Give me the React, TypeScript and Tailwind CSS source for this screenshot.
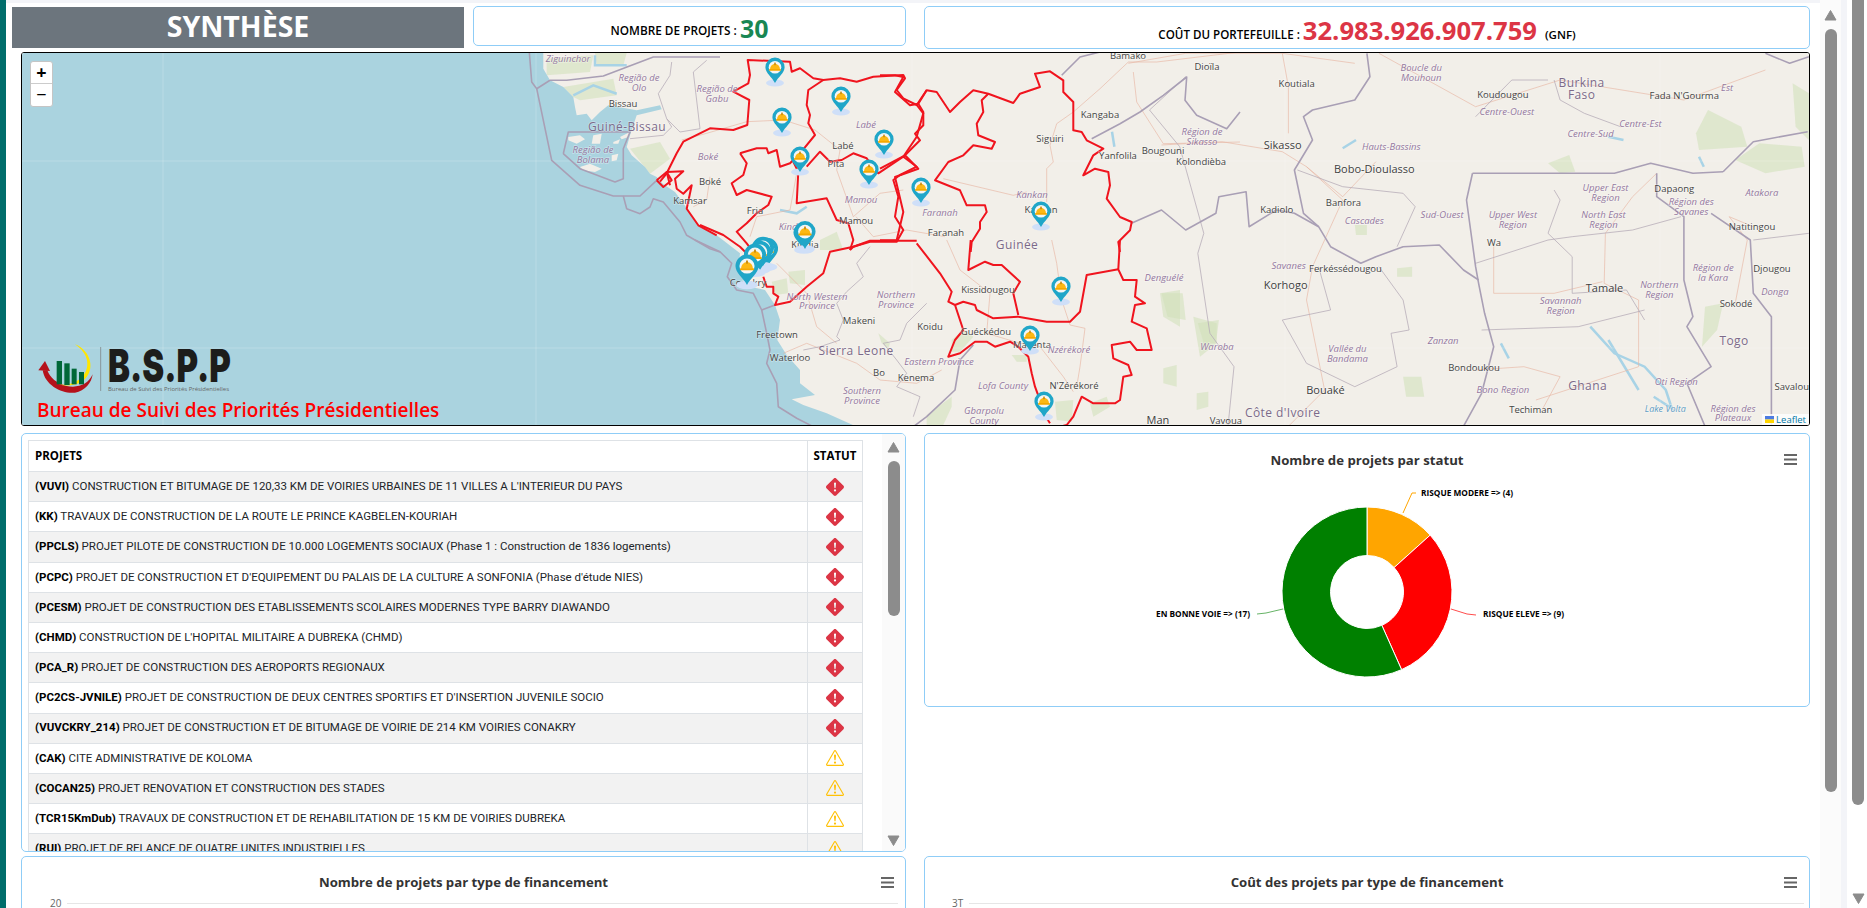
import React from 'react';
import { BsExclamationDiamondFill, BsExclamationTriangle } from 'react-icons/bs';

// points are read off crops: origin + value / 3
const pts = (ox: number, oy: number, list: number[]): string => {
  const out: string[] = [];
  for (let i = 0; i < list.length; i += 2) out.push(`${(ox + list[i] / 3).toFixed(1)},${(oy + list[i + 1] / 3).toFixed(1)}`);
  return out.join(' ');
};
// crop of the wide map, 1.656 x 3
const wide = (list: number[]): string => {
  const out: string[] = [];
  for (let i = 0; i < list.length; i += 2) out.push(`${(920 + list[i] / 1.656).toFixed(1)},${(list[i + 1] / 3).toFixed(1)}`);
  return out.join(' ');
};

const seaPoints = [
  '22,53',
  pts(480, 52, [190, 0, 190, 50, 210, 85, 250, 105, 280, 135, 285, 165, 290, 190, 320, 185, 335, 205, 360, 180, 385, 160, 470, 175, 540, 160, 545, 172, 470, 190, 450, 250, 440, 285, 455, 310, 495, 345, 510, 365, 530, 375, 548, 395, 585, 420, 600, 440, 622, 470, 655, 520, 710, 550]),
  pts(640, 240, [300, 40, 296, 80, 330, 140, 375, 150, 405, 195, 420, 240, 412, 300, 440, 345, 480, 390, 480, 430, 525, 465, 455, 478, 490, 495, 560, 520, 650, 560]),
  '857,426 22,426',
].join(' ');

const islands = [
  pts(480, 52, [265, 255, 300, 250, 315, 262, 290, 275, 265, 265]),
  pts(480, 52, [340, 250, 365, 245, 360, 275, 335, 275]),
  pts(480, 52, [400, 270, 420, 262, 415, 275, 400, 275]),
  pts(480, 52, [420, 255, 450, 240, 445, 255, 425, 262]),
  pts(480, 52, [300, 345, 330, 335, 365, 350, 345, 360, 310, 355]),
  pts(480, 52, [395, 310, 415, 305, 410, 325, 395, 328]),
];

const forest = [
  pts(480, 52, [250, 105, 400, 80, 410, 130, 300, 145, 280, 135]),
  pts(480, 52, [450, 290, 540, 270, 570, 320, 510, 365]),
  pts(480, 52, [200, 20, 340, 10, 330, 60, 200, 70]),
  pts(480, 52, [345, 3, 440, 3, 430, 40, 350, 40]),
  pts(640, 50, [540, 570, 590, 545, 610, 600, 540, 600]),
  pts(640, 240, [395, 125, 440, 115, 445, 160, 405, 165]),
  pts(640, 240, [445, 95, 495, 90, 495, 135, 450, 130]),
  pts(640, 240, [715, 280, 750, 310, 745, 325, 725, 310]),
  pts(880, 240, [215, 300, 250, 270, 280, 290, 240, 335, 215, 335]),
  pts(880, 240, [140, 525, 215, 470, 215, 500, 190, 555, 140, 555]),
  pts(880, 240, [525, 485, 580, 480, 575, 545, 530, 540]),
  pts(880, 240, [395, 345, 440, 345, 440, 365, 410, 365]),
  pts(880, 240, [840, 160, 900, 150, 900, 260, 850, 230]),
  pts(880, 240, [940, 230, 1010, 250, 1010, 310, 960, 350]),
  pts(880, 240, [850, 385, 890, 375, 890, 440, 850, 430]),
  pts(880, 240, [950, 460, 985, 455, 985, 500, 950, 510]),
  pts(880, 240, [630, 490, 680, 470, 690, 500, 640, 530]),
  wide([1305, 330, 1360, 380, 1370, 440, 1290, 450, 1285, 400]),
  wide([1350, 480, 1390, 430, 1460, 440, 1465, 500, 1400, 520]),
  wide([1445, 250, 1472, 280, 1472, 420, 1450, 380]),
  wide([1040, 490, 1075, 465, 1085, 515, 1060, 520]),
  wide([790, 805, 815, 800, 815, 830, 790, 830]),
  wide([720, 675, 740, 675, 740, 705, 722, 705]),
  wide([1300, 920, 1330, 910, 1320, 990, 1295, 1040]),
  wide([460, 970, 495, 960, 490, 1030, 470, 1030]),
  wide([400, 880, 435, 880, 440, 960, 410, 950]),
  wide([800, 1130, 830, 1130, 835, 1190, 805, 1190]),
];

// rivers and lakes: thin branches rather than blocks
const rivers = [
  wide([1110, 980, 1150, 1060, 1200, 1100, 1235, 1170, 1245, 1225, 1215, 1190]),
  wide([1140, 1020, 1170, 1110, 1190, 1170]),
  wide([962, 1030, 975, 1075]),
  wide([700, 445, 722, 420]),
  wide([318, 395, 322, 440]),
  wide([1290, 470, 1298, 500]),
  wide([1140, 410, 1165, 420]),
  pts(640, 50, [420, 480, 470, 490, 500, 470]),
  pts(480, 52, [280, 130, 340, 100, 410, 125]),
  pts(480, 52, [345, 10, 345, 40, 440, 40]),
];

const borders = [
  pts(480, 52, [148, 0, 155, 90, 170, 110, 210, 85]),
  pts(480, 52, [170, 110, 215, 325, 300, 400, 400, 432, 480, 432, 530, 385]),
  pts(480, 52, [430, 432, 440, 470, 480, 485, 510, 465, 520, 440, 550, 450, 600, 510, 620, 550, 690, 590, 720, 600]),
  pts(480, 52, [250, 305, 265, 240, 450, 240, 430, 290, 430, 380, 405, 390, 300, 350, 250, 305]),
  pts(640, 240, [165, 0, 240, 35, 275, 70, 262, 110, 290, 150, 340, 160, 365, 210, 380, 280, 390, 330, 380, 370, 410, 430, 415, 500, 470, 535, 520, 560]),
  pts(640, 240, [365, 210, 405, 195]),
  pts(480, 52, [210, 85, 260, 85, 370, 72, 520, 15, 720, 15]),
  pts(640, 240, [1000, 315, 960, 360, 945, 450, 860, 530, 820, 560]),
  wide([740, 160, 745, 230, 720, 300, 650, 330, 635, 350, 650, 420, 620, 510, 635, 640, 660, 680, 680, 740, 730, 790, 755, 770, 800, 740, 860, 735, 900, 810, 925, 840]),
  wide([350, 670, 400, 630, 440, 690, 490, 640, 495, 590, 540, 575, 545, 680, 590, 630, 620, 640, 660, 680]),
  wide([915, 520, 1050, 520, 1150, 520, 1210, 490, 1280, 520, 1330, 515]),
  wide([915, 520, 905, 600, 920, 800, 925, 850, 935, 940, 950, 1040, 930, 1180, 900, 1279]),
  wide([1220, 520, 1220, 590, 1265, 650, 1265, 840, 1280, 950, 1270, 980, 1310, 1100, 1270, 1150, 1300, 1279]),
  wide([1310, 640, 1375, 720, 1380, 880, 1410, 950, 1410, 1100, 1410, 1279]),
  wide([1330, 515, 1380, 425, 1470, 395]),
  wide([1400, 160, 1440, 190, 1472, 170]),
  pts(880, 52, [635, 260, 720, 215, 780, 180, 850, 130, 920, 75, 915, 145, 950, 190, 1040, 230, 1080, 180]),
  pts(880, 52, [545, 70, 600, 15, 660, 0]),
];

const regionLines = [
  pts(480, 52, [575, 30, 570, 70, 535, 125, 560, 200, 600, 240, 660, 230, 640, 60, 680, 25]),
  pts(480, 52, [450, 260, 550, 250, 575, 225, 560, 200]),
  pts(640, 240, [690, 20, 650, 70, 670, 110, 620, 155, 590, 190, 610, 240, 590, 290, 600, 300, 540, 320, 490, 330]),
  pts(640, 240, [860, 190, 800, 250, 780, 300, 730, 310, 770, 360, 800, 400, 770, 440, 840, 470, 820, 530]),
  wide([440, 230, 380, 330, 430, 440, 470, 700, 460, 760, 480, 1000, 520, 1100, 510, 1279]),
  wide([625, 510, 700, 560, 800, 580, 820, 620, 790, 740]),
  wide([760, 800, 800, 900, 810, 990, 780, 1000, 790, 1100, 720, 1160, 640, 1090, 600, 960, 680, 930, 660, 800]),
  wide([1050, 570, 1060, 600, 1040, 700, 1080, 770, 1080, 880, 1170, 870, 1200, 960]),
  wide([920, 790, 1040, 720, 1080, 710, 1180, 690, 1260, 650]),
  wide([930, 990, 1090, 980, 1200, 930]),
  wide([1160, 380, 1100, 340, 1060, 300, 1050, 240]),
  wide([920, 350, 980, 240, 1040, 240]),
  wide([1472, 700, 1380, 720]),
];

const roads = [
  pts(640, 50, [125, 270, 200, 250, 320, 215, 430, 210, 525, 240, 600, 300, 590, 360, 640, 500, 720, 430, 790, 420]),
  pts(640, 50, [210, 380, 200, 450, 160, 470]),
  pts(640, 50, [470, 370, 450, 480, 350, 500, 330, 560]),
  pts(640, 50, [648, 500, 700, 560, 800, 540, 915, 560]),
  pts(640, 240, [430, 340, 500, 310, 650, 370, 720, 420, 830, 430, 905, 390]),
  pts(640, 240, [410, 70, 500, 160, 530, 260, 590, 310]),
  pts(880, 52, [510, 280, 520, 330, 500, 350, 500, 450]),
  pts(880, 52, [510, 280, 530, 215, 580, 180, 660, 110, 745, 30, 830, 30, 1080, 0]),
  pts(880, 52, [760, 60, 770, 150, 850, 275, 1080, 270]),
  pts(880, 52, [190, 380, 400, 430, 440, 420]),
  pts(880, 240, [200, 0, 240, 90, 330, 160, 320, 280, 420, 310, 480, 320, 550, 410, 580, 455]),
  pts(880, 240, [515, 0, 530, 70, 545, 180, 570, 255, 615, 265, 600, 380, 590, 440]),
  wide([400, 435, 500, 425, 600, 455, 640, 500, 700, 600, 650, 800, 640, 900, 670, 1170, 610, 1279]),
  wide([755, 485, 700, 590, 640, 500]),
  wide([600, 160, 610, 260, 610, 400]),
  wide([345, 190, 440, 160, 600, 160, 720, 190]),
  wide([760, 160, 920, 320, 1060, 240, 1265, 300, 1400, 210]),
  wide([1133, 850, 1190, 900, 1190, 1100, 1020, 1200]),
  wide([950, 730, 950, 880, 1050, 880, 1130, 845]),
  wide([1133, 850, 1135, 700, 1180, 590, 1220, 520]),
  wide([1350, 910, 1370, 720, 1340, 650, 1380, 680]),
  wide([1030, 1230, 1060, 1130, 1000, 1100, 920, 1110]),
];

const redLines = [
  pts(640, 50, [60, 395, 80, 370, 110, 310, 130, 275, 210, 235, 280, 240, 322, 225, 328, 150, 280, 125, 325, 100, 330, 75, 323, 30, 450, 35, 455, 65, 480, 55, 520, 85, 550, 90, 600, 85, 650, 95, 700, 80, 790, 75, 795, 85, 770, 120, 790, 145, 830, 165, 860, 120]),
  pts(880, 52, [115, 155, 140, 115, 170, 120, 210, 180, 240, 150, 280, 115, 325, 125, 400, 153, 420, 125, 480, 105, 465, 65, 510, 58, 550, 85, 550, 120, 580, 150, 580, 235, 605, 240, 620, 265, 670, 290, 640, 310, 610, 370, 645, 350, 685, 360, 690, 400, 680, 440, 720, 495, 755, 510, 750, 535, 715, 570, 720, 600]),
  pts(880, 240, [720, 0, 715, 88, 730, 120, 770, 120, 765, 170, 795, 190, 765, 195, 755, 245, 800, 265, 815, 330, 770, 330, 750, 305, 695, 315, 700, 355, 745, 375, 755, 405, 730, 410, 720, 480, 705, 490, 670, 490, 640, 490, 605, 470, 580, 530, 560, 555, 540, 560]),
  pts(880, 240, [510, 550, 500, 535, 465, 440, 455, 400, 445, 350, 415, 320, 390, 305, 345, 320, 320, 305, 285, 305, 240, 340, 205, 350, 225, 300, 250, 270, 225, 195, 205, 185, 215, 155, 180, 100, 110, 10]),
  pts(640, 240, [830, 2, 690, 2, 640, 20, 570, 35, 550, 100, 500, 140, 450, 185, 405, 195, 415, 170, 400, 160, 400, 140, 380, 140, 370, 110]),
  pts(480, 52, [530, 385, 560, 360, 610, 358, 585, 380, 590, 410, 610, 425, 635, 400, 620, 470, 655, 520, 710, 550]),
  pts(480, 52, [530, 385, 550, 405, 575, 385, 560, 360, 570, 400]),
  pts(640, 50, [180, 525, 250, 555, 300, 590, 325, 615]),
  pts(640, 50, [300, 310, 350, 295, 380, 295, 385, 310, 410, 300, 420, 350, 450, 340, 480, 310, 525, 255, 505, 220, 510, 195, 500, 165, 505, 120, 550, 90]),
  pts(640, 50, [460, 335, 475, 365, 470, 460, 560, 445, 590, 510, 625, 520, 640, 570, 630, 600]),
  pts(640, 50, [300, 310, 320, 340, 310, 375, 275, 400, 290, 435, 320, 420, 395, 440, 385, 465, 350, 490, 320, 520, 290, 545, 320, 580, 335, 600]),
  pts(640, 50, [500, 350, 540, 305, 570, 335, 605, 330, 640, 310, 680, 325, 715, 370, 790, 320, 830, 350, 780, 375, 760, 390, 775, 440, 765, 500, 790, 540, 770, 575, 690, 575, 640, 590, 630, 600]),
  pts(640, 50, [790, 320, 830, 260, 850, 190, 830, 165]),
  pts(880, 52, [0, 70, 45, 70, 70, 75, 45, 120, 90, 160, 115, 155, 130, 180, 130, 220, 105, 245, 120, 265, 75, 310, 115, 350, 45, 375, 70, 480, 50, 565, 0, 565]),
  pts(880, 52, [75, 310, 0, 350]),
  pts(880, 52, [325, 125, 305, 145, 310, 180, 290, 215, 295, 250, 345, 270, 335, 290, 280, 280, 250, 310, 205, 330, 165, 385, 240, 415, 260, 460, 315, 460, 320, 480, 300, 510, 300, 530, 275, 570, 272, 600]),
  pts(880, 240, [272, 0, 265, 90, 315, 65, 340, 75, 365, 75, 420, 125, 400, 160, 415, 225]),
  pts(880, 240, [225, 195, 250, 185, 285, 195, 290, 210, 340, 235, 415, 230, 500, 245, 570, 245, 600, 215, 620, 105, 715, 88]),
];

type Label = [string, number, number, string];
// kinds: c city, b big city, r region, p country
const labels: Label[] = [
  ['Ziguinchor', 568, 62, 'r'], ['Região de', 639, 81, 'r'], ['Olo', 639, 91, 'r'], ['Bissau', 623, 107, 'c'],
  ['Guiné-Bissau', 627, 131, 'p'], ['Região de', 593, 153, 'r'], ['Bolama', 593, 163, 'r'], ['Região de', 717, 92, 'r'],
  ['Gabu', 717, 102, 'r'], ['Boké', 708, 160, 'r'], ['Boké', 710, 185, 'c'], ['Kamsar', 690, 204, 'c'], ['Labé', 866, 128, 'r'],
  ['Labé', 843, 149, 'c'], ['Pita', 836, 167, 'c'], ['Mamou', 861, 203, 'r'], ['Mamou', 856, 224, 'c'], ['Faranah', 940, 216, 'r'],
  ['Faranah', 946, 236, 'c'], ['Fria', 755, 214, 'c'], ['Kindia', 792, 230, 'r'], ['Kindia', 805, 248, 'c'], ['Conakry', 748, 286, 'c'],
  ['North Western', 817, 300, 'r'], ['Province', 817, 309, 'r'], ['Northern', 896, 298, 'r'], ['Province', 896, 308, 'r'],
  ['Makeni', 859, 324, 'c'], ['Freetown', 777, 338, 'c'], ['Waterloo', 790, 361, 'c'], ['Sierra Leone', 856, 355, 'p'],
  ['Eastern Province', 939, 365, 'r'], ['Bo', 879, 376, 'c'], ['Kenema', 916, 381, 'c'], ['Koidu', 930, 330, 'c'],
  ['Southern', 862, 394, 'r'], ['Province', 862, 404, 'r'], ['Lofa County', 1003, 389, 'r'], ['Gbarpolu', 984, 414, 'r'],
  ['County', 984, 424, 'r'], ['Kissidougou', 988, 293, 'c'], ['Guéckédou', 986, 335, 'c'], ['Macenta', 1032, 348, 'c'],
  ['Nzérékoré', 1069, 353, 'r'], ["N'Zérékoré", 1074, 389, 'c'], ['Man', 1158, 424, 'b'], ['Vavoua', 1227, 424, 'c'],
  ['Kankan', 1032, 198, 'r'], ['Kankan', 1041, 213, 'c'], ['Guinée', 1017, 249, 'p'], ['Siguiri', 1050, 142, 'c'],
  ['Kangaba', 1100, 118, 'c'], ['Bamako', 1128, 59, 'c'], ['Yanfolila', 1118, 159, 'c'], ['Bougouni', 1163, 154, 'c'],
  ['Région de', 1203, 135, 'r'], ['Sikasso', 1203, 145, 'r'], ['Kolondièba', 1202, 165, 'c'], ['Dioïla', 1208, 70, 'c'],
  ['Denguélé', 1164, 281, 'r'], ['Waroba', 1218, 350, 'r'], ['Koutiala', 1298, 87, 'c'], ['Boucle du', 1423, 71, 'r'],
  ['Mouhoun', 1423, 81, 'r'], ['Sikasso', 1284, 149, 'b'], ['Kadiolo', 1278, 213, 'c'], ['Hauts-Bassins', 1393, 150, 'r'],
  ['Bobo-Dioulasso', 1376, 173, 'b'], ['Banfora', 1345, 206, 'c'], ['Cascades', 1366, 224, 'r'], ['Sud-Ouest', 1444, 218, 'r'],
  ['Savanes', 1290, 269, 'r'], ['Korhogo', 1287, 289, 'b'], ['Ferkéssédougou', 1347, 272, 'c'], ['Vallée du', 1349, 352, 'r'],
  ['Bandama', 1349, 362, 'r'], ['Zanzan', 1445, 344, 'r'], ['Bondoukou', 1476, 371, 'c'], ['Bouaké', 1327, 394, 'b'],
  ["Côte d'Ivoire", 1284, 417, 'p'], ['Koudougou', 1505, 98, 'c'], ['Centre-Ouest', 1509, 115, 'r'], ['Burkina', 1584, 87, 'p'],
  ['Faso', 1584, 99, 'p'], ['Centre-Sud', 1593, 137, 'r'], ['Centre-Est', 1643, 127, 'r'], ["Fada N'Gourma", 1687, 99, 'c'],
  ['Est', 1730, 91, 'r'], ['Upper East', 1608, 191, 'r'], ['Region', 1608, 201, 'r'], ['North East', 1606, 218, 'r'],
  ['Region', 1606, 228, 'r'], ['Upper West', 1515, 218, 'r'], ['Region', 1515, 228, 'r'], ['Wa', 1496, 246, 'c'], ['Dapaong', 1677, 192, 'c'],
  ['Région des', 1694, 205, 'r'], ['Savanes', 1694, 215, 'r'], ['Atakora', 1765, 196, 'r'], ['Natitingou', 1755, 230, 'c'],
  ['Djougou', 1775, 272, 'c'], ['Région de', 1716, 271, 'r'], ['la Kara', 1716, 281, 'r'], ['Donga', 1778, 295, 'r'], ['Tamale', 1607, 292, 'b'],
  ['Northern', 1662, 288, 'r'], ['Region', 1662, 298, 'r'], ['Savannah', 1563, 304, 'r'], ['Region', 1563, 314, 'r'], ['Sokodé', 1739, 307, 'c'],
  ['Togo', 1737, 345, 'p'], ['Ghana', 1590, 390, 'p'], ['Oti Region', 1679, 385, 'r'], ['Bono Region', 1505, 393, 'r'], ['Techiman', 1533, 413, 'c'],
  ['Lake Volta', 1668, 412, 'w'], ['Savalou', 1795, 390, 'c'], ['Région des', 1736, 412, 'r'], ['Plateaux', 1736, 421, 'r'],
];

const labelStyle: Record<string, { size: number; fill: string; italic?: boolean; spacing?: number }> = {
  c: { size: 9.5, fill: '#444444' },
  b: { size: 11, fill: '#404040' },
  r: { size: 9.5, fill: '#94789f', italic: true },
  w: { size: 9, fill: '#5f9cc4', italic: true },
  p: { size: 12, fill: '#7c6a89', spacing: 0.4 },
};

const pins: [number, number, number][] = [
  [775, 83, 1], [841, 112, 1], [782, 133, 1], [884, 155, 1], [800, 172, 1], [869, 185, 1], [921, 203, 1],
  [804, 250, 1.1], [805, 249, 1.1], [767, 267, 1.15], [763, 266, 1.15], [760, 270, 1.15], [755, 273, 1.15], [747, 285, 1.2],
  [1041, 227, 1], [1061, 302, 1], [1030, 351, 1], [1044, 417, 1],
];

const Pin: React.FC<{ x: number; y: number; s: number }> = ({ x, y, s }) => (
  <g transform={`translate(${x} ${y}) scale(${s})`}>
    <ellipse cx="0" cy="0" rx="9" ry="3.5" fill="#cfdff8" />
    <path d="M0 0 C-3 -6 -9.6 -10 -9.6 -15.8 A9.6 9.6 0 0 1 9.6 -15.8 C9.6 -10 3 -6 0 0 Z" fill="#20a6c8" />
    <circle cx="0" cy="-15.8" r="6.3" fill="#f4f6f5" />
    <path d="M-5 -13.6 A5 5.6 0 0 1 5 -13.6 Z" fill="#fdb813" />
    <rect x="-6" y="-14" width="12" height="1.8" rx="0.9" fill="#f5a800" />
    <rect x="-0.8" y="-20.4" width="1.6" height="2.6" fill="#c98a10" />
  </g>
);

const MapSvg: React.FC = () => (
  <svg viewBox="22 53 1788 372" width="1788" height="372" className="block">
    <rect x="22" y="53" width="1788" height="372" fill="#f2efe9" />
    {forest.map((p, i) => <polygon key={i} points={p} fill="#cfe0b8" opacity="0.55" />)}
    <polygon points={seaPoints} fill="#aad3df" />
    {islands.map((p, i) => <polygon key={i} points={p} fill="#f2efe9" />)}
    {rivers.map((p, i) => <polyline key={i} points={p} fill="none" stroke="#a8d3e6" strokeWidth="2.5" />)}
    {[163, 536, 912, 1285, 1660].map(x => <line key={x} x1={x} x2={x} y1="53" y2="425" stroke="#ffffff" strokeOpacity="0.2" />)}
    {[161, 348].map(y => <line key={y} x1="22" x2="1810" y1={y} y2={y} stroke="#ffffff" strokeOpacity="0.2" />)}
    {roads.map((p, i) => <polyline key={i} points={p} fill="none" stroke="#e8b5a2" strokeWidth="0.8" opacity="0.8" />)}
    {regionLines.map((p, i) => <polyline key={i} points={p} fill="none" stroke="#b7adb9" strokeWidth="0.8" />)}
    {borders.map((p, i) => <polyline key={i} points={p} fill="none" stroke="#a99fb5" strokeWidth="1.6" strokeLinejoin="round" />)}
    {redLines.map((p, i) => <polyline key={i} points={p} fill="none" stroke="#f0141e" strokeWidth="2" strokeLinejoin="round" />)}
    {labels.map(([t, x, y, k], i) => {
      const s = labelStyle[k];
      // the right part of the list was read at 1.65 before the crop scale was corrected
      const lx = x > 1200 ? x - (x - 920) * 0.0036 : x;
      return (
        <text key={i} x={lx} y={y} textAnchor="middle" fontSize={s.size} fill={s.fill} fontStyle={s.italic ? 'italic' : 'normal'} letterSpacing={s.spacing ?? 0} stroke="#ffffff" strokeOpacity="0.35" strokeWidth="1.4" paintOrder="stroke">
          {t}
        </text>
      );
    })}
    {pins.map(([x, y, s], i) => <Pin key={i} x={x} y={y} s={s} />)}
  </svg>
);

const Logo: React.FC = () => (
  <svg viewBox="30 340 210 56" width="210" height="56" className="block">
    <g transform="translate(20 330) scale(0.3333)">
      <path d="M68 118 C75 165 130 190 165 185 C195 180 215 155 218 130 C205 160 175 172 140 165 C110 158 90 140 82 118 Z" fill="#b5121b" />
      <polygon points="55,118 75,90 90,120" fill="#b5121b" />
      <path d="M165 40 C205 55 222 100 205 130 C190 160 150 170 115 160 C150 165 185 150 198 120 C210 90 195 60 165 40 Z" fill="#ffe600" />
      <rect x="110" y="90" width="16" height="70" fill="#006838" />
      <rect x="133" y="97" width="16" height="65" fill="#006838" />
      <rect x="155" y="113" width="15" height="47" fill="#006838" />
      <rect x="177" y="123" width="15" height="37" fill="#006838" />
      <line x1="242" x2="242" y1="48" y2="180" stroke="#777777" strokeWidth="2" />
    </g>
    <text x="108" y="381" fontSize="45" fontFamily="Inter, sans-serif" fontWeight="900" fill="#1d1d1b" textLength="123" lengthAdjust="spacingAndGlyphs">B.S.P.P</text>
    <text x="108" y="390" fontSize="6" fill="#666666" textLength="121" lengthAdjust="spacingAndGlyphs">Bureau de Suivi des Priorités Présidentielles</text>
  </svg>
);

const projects: [string, string, boolean][] = [
  ['(VUVI)', "CONSTRUCTION ET BITUMAGE DE 120,33 KM DE VOIRIES URBAINES DE 11 VILLES A L'INTERIEUR DU PAYS", true],
  ['(KK)', 'TRAVAUX DE CONSTRUCTION DE LA ROUTE LE PRINCE KAGBELEN-KOURIAH', true],
  ['(PPCLS)', 'PROJET PILOTE DE CONSTRUCTION DE 10.000 LOGEMENTS SOCIAUX (Phase 1 : Construction de 1836 logements)', true],
  ['(PCPC)', "PROJET DE CONSTRUCTION ET D'EQUIPEMENT DU PALAIS DE LA CULTURE A SONFONIA (Phase d'étude NIES)", true],
  ['(PCESM)', 'PROJET DE CONSTRUCTION DES ETABLISSEMENTS SCOLAIRES MODERNES TYPE BARRY DIAWANDO', true],
  ['(CHMD)', "CONSTRUCTION DE L'HOPITAL MILITAIRE A DUBREKA (CHMD)", true],
  ['(PCA_R)', 'PROJET DE CONSTRUCTION DES AEROPORTS REGIONAUX', true],
  ['(PC2CS-JVNILE)', "PROJET DE CONSTRUCTION DE DEUX CENTRES SPORTIFS ET D'INSERTION JUVENILE SOCIO", true],
  ['(VUVCKRY_214)', 'PROJET DE CONSTRUCTION ET DE BITUMAGE DE VOIRIE DE 214 KM VOIRIES CONAKRY', true],
  ['(CAK)', 'CITE ADMINISTRATIVE DE KOLOMA', false],
  ['(COCAN25)', 'PROJET RENOVATION ET CONSTRUCTION DES STADES', false],
  ['(TCR15KmDub)', 'TRAVAUX DE CONSTRUCTION ET DE REHABILITATION DE 15 KM DE VOIRIES DUBREKA', false],
  ['(RUI)', 'PROJET DE RELANCE DE QUATRE UNITES INDUSTRIELLES', false],
];

const MenuIcon: React.FC<{ right: string }> = ({ right }) => (
  <svg width="13" height="11" viewBox="0 0 13 11" className={`absolute top-[20px] ${right}`}>
    <rect y="0" width="13" height="2" fill="#666666" />
    <rect y="4.5" width="13" height="2" fill="#666666" />
    <rect y="9" width="13" height="2" fill="#666666" />
  </svg>
);

const Triangle: React.FC<{ down?: boolean }> = ({ down }) => (
  <svg width="13" height="11" viewBox="0 0 13 11" className="block shrink-0">
    <polygon points={down ? '1,1 12,1 6.5,10.5' : '6.5,0.5 12,10 1,10'} fill="#8c8c8c" stroke="#8c8c8c" strokeLinejoin="round" />
  </svg>
);

const polar = (cx: number, cy: number, r: number, deg: number): string => {
  const a = ((deg - 90) * Math.PI) / 180;
  return `${(cx + r * Math.cos(a)).toFixed(2)} ${(cy + r * Math.sin(a)).toFixed(2)}`;
};
const slice = (from: number, to: number): string => {
  const large = to - from > 180 ? 1 : 0;
  return `M${polar(442, 132, 85, from)} A85 85 0 ${large} 1 ${polar(442, 132, 85, to)} L${polar(442, 132, 36.5, to)} A36.5 36.5 0 ${large} 0 ${polar(442, 132, 36.5, from)} Z`;
};

const Donut: React.FC = () => (
  <svg viewBox="0 0 884 230" width="884" height="230" className="block">
    <path d={slice(0, 48)} fill="#ffa500" stroke="#ffffff" />
    <path d={slice(48, 156)} fill="#ff0000" stroke="#ffffff" />
    <path d={slice(156, 360)} fill="#008000" stroke="#ffffff" />
    <polyline points="478,53 487,33 491,33" fill="none" stroke="#ffa500" />
    <polyline points="526,149 542,154 551,155" fill="none" stroke="#ff0000" opacity="0.7" />
    <polyline points="358,149 341,153 332,154" fill="none" stroke="#008000" opacity="0.6" />
    <text x="496" y="36" fontSize="8" fontWeight="700" fill="#000000" textLength="92" lengthAdjust="spacingAndGlyphs">RISQUE MODERE =&gt; (4)</text>
    <text x="558" y="157" fontSize="8" fontWeight="700" fill="#000000" textLength="81" lengthAdjust="spacingAndGlyphs">RISQUE ELEVE =&gt; (9)</text>
    <text x="231" y="157" fontSize="8" fontWeight="700" fill="#000000" textLength="94" lengthAdjust="spacingAndGlyphs">EN BONNE VOIE =&gt; (17)</text>
  </svg>
);

const ChartCard: React.FC<{ title: string; tick: string; pad: string; right: string }> = ({ title, tick, pad, right }) => (
  <div className="relative h-[60px] rounded-[5px] border border-[#8fcdf7] bg-white">
    <h3 className="pt-[15px] text-center text-[13.2px] leading-[20px] font-bold text-[#333333]">{title}</h3>
    <MenuIcon right={right} />
    <div className={`mt-[4px] flex items-center gap-[6px] ${pad}`}>
      <span className="text-[10px] leading-[14px] text-[#666666]">{tick}</span>
      <div className="h-px flex-1 bg-[#e6e6e6]" />
    </div>
  </div>
);

export default function App() {
  return (
    <div className="flex h-screen overflow-hidden bg-white font-['Open_Sans',sans-serif] text-black">
      <div className="w-[6px] shrink-0 bg-[#006d6b]" />
      <main className="w-[1814px] shrink-0 overflow-hidden border-t-[3px] border-[#f3f4f8] pr-[10px] pl-[15px]">
        <div className="mt-[3px] flex items-start gap-[18px]">
          <div className="flex w-[885px] shrink-0 items-start">
            <div className="mt-px -ml-[9px] flex h-[41px] w-[452px] shrink-0 items-center justify-center bg-[#6c757d] pb-[2px] text-[28.5px] leading-none font-bold text-white">SYNTHÈSE</div>
            <div className="ml-[9px] flex h-[40px] flex-1 items-end justify-center rounded-[5px] border border-[#8fcdf7] pb-[2px]">
              <span className="pb-[3px] text-[11.8px] font-semibold">NOMBRE DE PROJETS :&nbsp;</span>
              <span className="text-[25px] leading-[30px] font-bold text-[#198754]">30</span>
            </div>
          </div>
          <div className="flex h-[43px] w-[886px] shrink-0 items-end justify-center rounded-[5px] border border-[#8fcdf7] pb-[1px]">
            <span className="pb-[4px] text-[11.6px] font-semibold">COÛT DU PORTEFEUILLE :&nbsp;</span>
            <span className="text-[25.6px] leading-[32px] font-bold text-[#dc3545]">32.983.926.907.759</span>
            <span className="pb-[4px] pl-[8px] text-[11.5px] font-semibold">(GNF)</span>
          </div>
        </div>

        <div className="relative mt-[3px] h-[374px] overflow-hidden rounded-[3px] border border-black">
          <MapSvg />
          <div className="absolute top-[8px] left-[8px] w-[23px] rounded-[3px] border border-[#c5c5c5] bg-white text-center text-black">
            <div className="h-[22px] border-b border-[#cccccc] text-[18px] leading-[21px] font-bold">+</div>
            <div className="h-[22px] text-[18px] leading-[20px]">−</div>
          </div>
          <div className="absolute right-0 bottom-0 flex h-[11px] items-center gap-[2px] bg-white/80 px-[3px] text-[9.5px] leading-none text-[#0078a8]">
            <svg width="9" height="7" viewBox="0 0 9 7" className="block">
              <rect width="9" height="3.5" fill="#4c7be1" />
              <rect y="3.5" width="9" height="3.5" fill="#ffd500" />
            </svg>
            Leaflet
          </div>
          <div className="absolute top-[288px] left-[8px]">
            <Logo />
            <p className="mt-[1px] ml-[7px] text-[19px] leading-[24px] font-semibold whitespace-nowrap text-[#ff0000]">Bureau de Suivi des Priorités Présidentielles</p>
          </div>
        </div>

        <div className="mt-[7px] flex items-start gap-[18px]">
          <div className="flex h-[419px] w-[885px] shrink-0 overflow-hidden rounded-[5px] border border-[#8fcdf7]">
            <div className="h-full flex-1 overflow-hidden pt-[6px] pl-[6px]">
              <table className="w-[835px] border-collapse font-['Roboto',sans-serif] text-[11.5px] text-[#212529]">
                <thead>
                  <tr className="h-[31px]">
                    <th className="border border-[#dee2e6] px-[6px] text-left font-['Open_Sans',sans-serif] text-[11.5px] font-bold text-black">PROJETS</th>
                    <th className="w-[55px] border border-[#dee2e6] text-center font-['Open_Sans',sans-serif] text-[11.5px] font-bold text-black">STATUT</th>
                  </tr>
                </thead>
                <tbody>
                  {projects.map((p, i) => (
                    <tr key={i} className={i % 2 === 0 ? 'h-[30.2px] bg-[#f2f2f2]' : 'h-[30.2px] bg-white'}>
                      <td className="border border-[#dee2e6] px-[6px] whitespace-nowrap">
                        <span className="font-bold text-black">{p[0]}</span> {p[1]}
                      </td>
                      <td className="border border-[#dee2e6] text-center">
                        {p[2]
                          ? <BsExclamationDiamondFill className="mx-auto text-[#dc3545]" size={18} />
                          : <BsExclamationTriangle className="mx-auto text-[#ffc107]" size={18} />}
                      </td>
                    </tr>
                  ))}
                </tbody>
              </table>
            </div>
            <div className="flex w-[23px] shrink-0 flex-col items-center bg-[#fafafa] pt-[8px]">
              <Triangle />
              <div className="mt-[8px] h-[155px] w-[12px] rounded-full bg-[#8c8c8c]" />
              <div className="flex-1" />
              <div className="pb-[5px]"><Triangle down /></div>
            </div>
          </div>

          <div className="relative h-[274px] w-[886px] shrink-0 rounded-[5px] border border-[#8fcdf7]">
            <h3 className="pt-[16px] text-center text-[13.2px] leading-[20px] font-bold text-[#333333]">Nombre de projets par statut</h3>
            <MenuIcon right="right-[12px]" />
            <div className="-mt-[10px]"><Donut /></div>
          </div>
        </div>

        <div className="mt-[4px] flex items-start gap-[18px]">
          <div className="w-[885px] shrink-0"><ChartCard title="Nombre de projets par type de financement" tick="20" pad="pr-[7px] pl-[28px]" right="right-[11px]" /></div>
          <div className="w-[886px] shrink-0"><ChartCard title="Coût des projets par type de financement" tick="3T" pad="pr-[5px] pl-[27px]" right="right-[12px]" /></div>
        </div>
      </main>

      <div className="flex w-[21px] shrink-0 flex-col items-center bg-[#fbfbfb] pt-[10px]">
        <Triangle />
        <div className="mt-[8px] h-[763px] w-[12px] rounded-full bg-[#8c8c8c]" />
      </div>
      <div className="w-[6px] shrink-0 bg-[#f3f4f8]" />
      <div className="flex w-[20px] shrink-0 flex-col bg-white pr-[3px] pl-[5px]">
        <div className="h-[805px] w-[12px] rounded-b-full bg-[#8c8c8c]" />
        <div className="flex-1" />
        <div className="pb-[4px]"><Triangle down /></div>
      </div>
    </div>
  );
}
